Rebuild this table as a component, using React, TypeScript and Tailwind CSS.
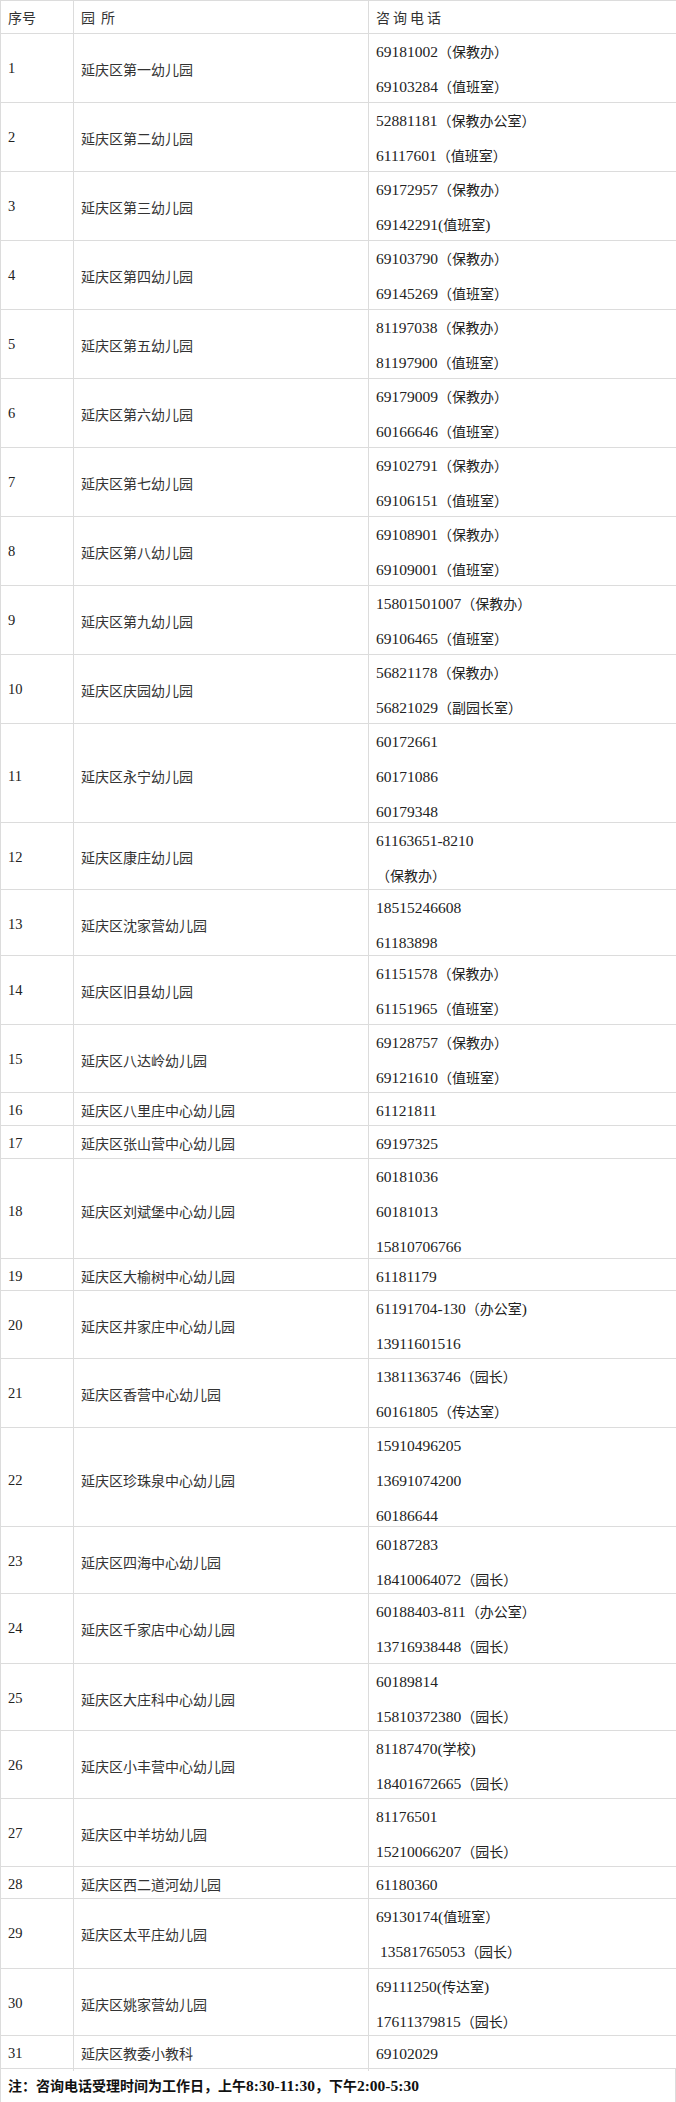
import React from "react";

type Row = { no: number; name: string; phones: string[]; h: number };

const rows: Row[] = [
  { no: 1, name: "延庆区第一幼儿园", phones: ["69181002（保教办）", "69103284（值班室）"], h: 69 },
  { no: 2, name: "延庆区第二幼儿园", phones: ["52881181（保教办公室）", "61117601（值班室）"], h: 69 },
  { no: 3, name: "延庆区第三幼儿园", phones: ["69172957（保教办）", "69142291(值班室)"], h: 69 },
  { no: 4, name: "延庆区第四幼儿园", phones: ["69103790（保教办）", "69145269（值班室）"], h: 69 },
  { no: 5, name: "延庆区第五幼儿园", phones: ["81197038（保教办）", "81197900（值班室）"], h: 69 },
  { no: 6, name: "延庆区第六幼儿园", phones: ["69179009（保教办）", "60166646（值班室）"], h: 69 },
  { no: 7, name: "延庆区第七幼儿园", phones: ["69102791（保教办）", "69106151（值班室）"], h: 69 },
  { no: 8, name: "延庆区第八幼儿园", phones: ["69108901（保教办）", "69109001（值班室）"], h: 69 },
  { no: 9, name: "延庆区第九幼儿园", phones: ["15801501007（保教办）", "69106465（值班室）"], h: 69 },
  { no: 10, name: "延庆区庆园幼儿园", phones: ["56821178（保教办）", "56821029（副园长室）"], h: 69 },
  { no: 11, name: "延庆区永宁幼儿园", phones: ["60172661", "60171086", "60179348"], h: 99 },
  { no: 12, name: "延庆区康庄幼儿园", phones: ["61163651-8210", "（保教办）"], h: 67 },
  { no: 13, name: "延庆区沈家营幼儿园", phones: ["18515246608", "61183898"], h: 66 },
  { no: 14, name: "延庆区旧县幼儿园", phones: ["61151578（保教办）", "61151965（值班室）"], h: 69 },
  { no: 15, name: "延庆区八达岭幼儿园", phones: ["69128757（保教办）", "69121610（值班室）"], h: 68 },
  { no: 16, name: "延庆区八里庄中心幼儿园", phones: ["61121811"], h: 33 },
  { no: 17, name: "延庆区张山营中心幼儿园", phones: ["69197325"], h: 33 },
  { no: 18, name: "延庆区刘斌堡中心幼儿园", phones: ["60181036", "60181013", "15810706766"], h: 100 },
  { no: 19, name: "延庆区大榆树中心幼儿园", phones: ["61181179"], h: 32 },
  { no: 20, name: "延庆区井家庄中心幼儿园", phones: ["61191704-130（办公室)", "13911601516"], h: 68 },
  { no: 21, name: "延庆区香营中心幼儿园", phones: ["13811363746（园长）", "60161805（传达室）"], h: 69 },
  { no: 22, name: "延庆区珍珠泉中心幼儿园", phones: ["15910496205", "13691074200", "60186644"], h: 99 },
  { no: 23, name: "延庆区四海中心幼儿园", phones: ["60187283", "18410064072（园长）"], h: 67 },
  { no: 24, name: "延庆区千家店中心幼儿园", phones: ["60188403-811（办公室）", "13716938448（园长）"], h: 70 },
  { no: 25, name: "延庆区大庄科中心幼儿园", phones: ["60189814", "15810372380（园长）"], h: 67 },
  { no: 26, name: "延庆区小丰营中心幼儿园", phones: ["81187470(学校)", "18401672665（园长）"], h: 68 },
  { no: 27, name: "延庆区中羊坊幼儿园", phones: ["81176501", "15210066207（园长）"], h: 68 },
  { no: 28, name: "延庆区西二道河幼儿园", phones: ["61180360"], h: 32 },
  { no: 29, name: "延庆区太平庄幼儿园", phones: ["69130174(值班室）", "\u00a013581765053（园长）"], h: 70 },
  { no: 30, name: "延庆区姚家营幼儿园", phones: ["69111250(传达室)", "17611379815（园长）"], h: 67 },
  { no: 31, name: "延庆区教委小教科", phones: ["69102029"], h: 33 },
];

// latin runs (digits, dashes, half-width parens) get the serif face
function Mixed({ text, bold }: { text: string; bold?: boolean }) {
  const parts = text.split(/([0-9()\-:\u00a0]+)/);
  return (
    <>
      {parts.map((p, i) =>
        /^[0-9()\-:\u00a0]/.test(p) ? (
          <span
            key={i}
            className={
              bold
                ? "font-['Liberation_Serif',serif] text-[15.5px] font-bold"
                : "font-['Liberation_Serif',serif] text-[15.5px]"
            }
          >
            {p}
          </span>
        ) : (
          <span key={i}>{p}</span>
        )
      )}
    </>
  );
}

const cell = "flex h-full flex-col justify-center border-r border-[#dcdcdc] px-[7px]";

export default function App() {
  return (
    <div className="w-[676px] border-l border-t border-[#dcdcdc] bg-white font-['Noto_Sans_CJK_SC',sans-serif] text-[14px] text-[#333]">
      <div className="grid h-[33px] grid-cols-[73px_295px_308px] border-b border-[#dcdcdc]">
        <div className={cell}>序号</div>
        <div className={cell}>
          <div className="flex gap-[6px]">
            <span>园</span>
            <span>所</span>
          </div>
        </div>
        <div className={cell}>
          <div className="flex gap-[3px]">
            <span>咨</span>
            <span>询</span>
            <span>电</span>
            <span>话</span>
          </div>
        </div>
      </div>

      {rows.map((r) => (
        <div
          key={r.no}
          className="grid grid-cols-[73px_295px_308px] border-b border-[#dcdcdc]"
          style={{ height: r.h }}
        >
          <div className={cell}>
            <span className="font-['Liberation_Serif',serif] text-[14.5px] text-[#222]">{r.no}</span>
          </div>
          <div className={cell}>{r.name}</div>
          <div className={cell}>
            {r.phones.map((p, i) => (
              <div key={i} className="leading-[34px] text-[#222] whitespace-nowrap">
                <Mixed text={p} />
              </div>
            ))}
          </div>
        </div>
      ))}

      <div className="flex h-[34px] items-center border-b border-r border-[#dcdcdc] px-[7px] font-bold text-[#111]">
        <Mixed text="注：咨询电话受理时间为工作日，上午8:30-11:30，下午2:00-5:30" bold />
      </div>
    </div>
  );
}
